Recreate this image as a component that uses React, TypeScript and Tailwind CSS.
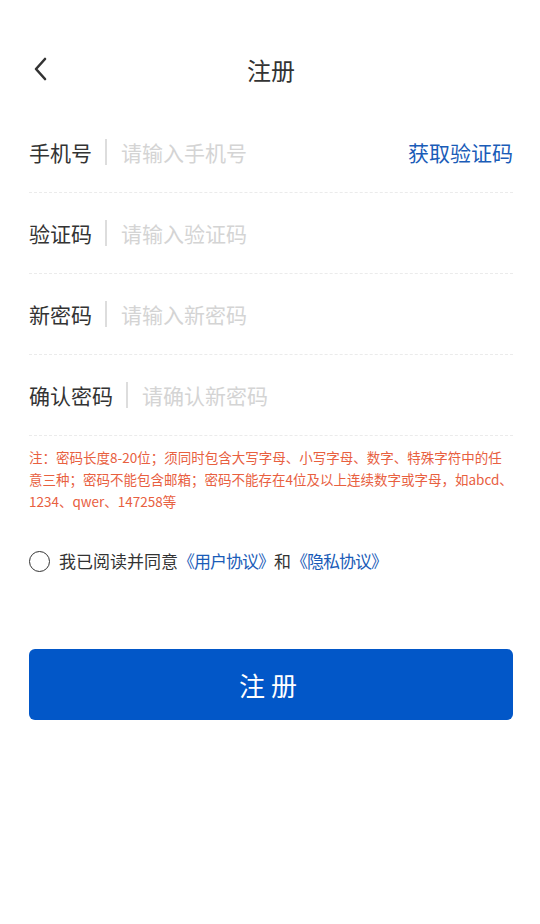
import { useState } from "react"

const font = { fontFamily: '"Noto Sans CJK SC", "Noto Sans", sans-serif' }

type Row = { label: string; placeholder: string; action?: string; type?: string }

const rows: Row[] = [
  { label: "手机号", placeholder: "请输入手机号", action: "获取验证码" },
  { label: "验证码", placeholder: "请输入验证码" },
  { label: "新密码", placeholder: "请输入新密码", type: "password" },
  { label: "确认密码", placeholder: "请确认新密码", type: "password" },
]

function FieldRow({ row }: { row: Row }) {
  return (
    <div className="flex h-[81px] items-center border-b border-dashed border-[#ebebeb]">
      <span className="text-[21px] leading-[30px] text-[#333333]">{row.label}</span>
      <span className="ml-[13px] mr-[14px] h-[26px] w-[2px] bg-[#dddddd]" />
      <input
        type={row.type ?? "text"}
        placeholder={row.placeholder}
        className="min-w-0 flex-1 bg-transparent text-[21px] leading-[30px] text-[#333333] outline-none placeholder:text-[#d4d4d4]"
        style={font}
      />
      {row.action && (
        <button className="text-[21px] leading-[30px] text-[#1a5cb8]" style={font}>
          {row.action}
        </button>
      )}
    </div>
  )
}

export default function App() {
  const [agreed, setAgreed] = useState(false)

  return (
    <div className="min-h-[924px] w-full bg-white pl-[29px] pr-[27px]" style={font}>
      <header className="relative flex h-[112px] justify-center pt-[54px]">
        <button className="absolute left-[4px] top-[57px] text-[#333333]">
          <svg width="14" height="24" viewBox="0 0 14 24" fill="none">
            <path d="M12 2 L3 12 L12 22" stroke="currentColor" strokeWidth="2.6" strokeLinecap="round" strokeLinejoin="round" />
          </svg>
        </button>
        <h1 className="text-[24px] leading-[32px] text-[#333333]">注册</h1>
      </header>

      {rows.map((r) => (
        <FieldRow key={r.label} row={r} />
      ))}

      <p className="mt-[10px] text-[13.5px] leading-[22px] text-[#e8603f]">
        注：密码长度8-20位；须同时包含大写字母、小写字母、数字、特殊字符中的任意三种；密码不能包含邮箱；密码不能存在4位及以上连续数字或字母，如abcd、1234、qwer、147258等
      </p>

      <label className="mt-[38px] flex h-[22px] items-center" onClick={() => setAgreed(!agreed)}>
        <span className="flex h-[21px] w-[21px] items-center justify-center rounded-full border-[1.5px] border-[#333333]">
          {agreed && <span className="h-[11px] w-[11px] rounded-full bg-[#0257c8]" />}
        </span>
        <span className="ml-[9px] text-[17px] leading-[22px] text-[#333333]">
          我已阅读并同意<span className="tracking-[-1px] text-[#1a5cb8]">《用户协议》</span>和<span className="tracking-[-1px] text-[#1a5cb8]">《隐私协议》</span>
        </span>
      </label>

      <button className="mt-[77px] flex h-[71px] w-full items-center justify-center rounded-[6px] bg-[#0257c8] text-[26px] tracking-[6px] text-white">
        注册
      </button>
    </div>
  )
}
